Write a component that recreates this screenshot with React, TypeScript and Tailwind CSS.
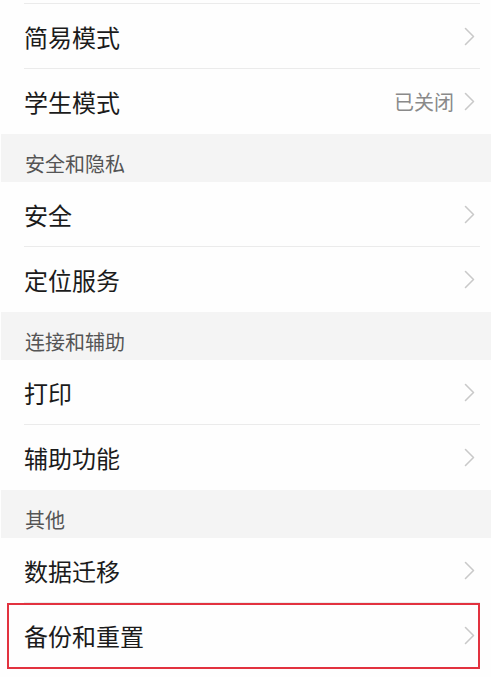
import React from "react";

const Chevron = () => (
  <svg width="11" height="19" viewBox="0 0 11 19" fill="none" className="shrink-0">
    <polyline points="1.5,1.5 9.5,9.5 1.5,17.5" stroke="#c9c9c9" strokeWidth="1.6" strokeLinecap="round" strokeLinejoin="round" />
  </svg>
);

type RowProps = { label: string; value?: string; divider?: boolean; highlight?: boolean };

const Row = ({ label, value, divider, highlight }: RowProps) => (
  <div className="relative bg-[#fefefe]">
    <div className={`flex items-center pl-6 pr-4 ${divider ? "h-16" : "h-[65px]"}`}>
      <span className="flex-1 text-[24px] leading-none text-[#1b1b1b] pt-px">{label}</span>
      {value && <span className="mr-[10px] text-[20px] leading-none text-[#8a8a8a]">{value}</span>}
      <Chevron />
    </div>
    {divider && <div className="ml-6 mr-[11px] h-px bg-[#ebebeb]" />}
    {highlight && <div className="absolute left-[7px] right-[11px] top-0 bottom-[-1px] border-2 border-[#e2323f]" />}
  </div>
);

const Header = ({ label }: { label: string }) => (
  <div className="flex h-12 items-center bg-[#f4f4f4] pl-6 pt-3 ml-px">
    <span className="text-[20px] leading-none text-[#555555]">{label}</span>
  </div>
);

export default function App() {
  return (
    <div
      className="w-[491px] h-[677px] overflow-hidden bg-[#fefefe]"
      style={{ fontFamily: '"Noto Sans CJK SC", "Noto Sans", sans-serif' }}
    >
      <div className="h-[3px]" />
      <div className="ml-6 mr-[11px] h-px bg-[#ebebeb]" />
      <Row label="简易模式" divider />
      <Row label="学生模式" value="已关闭" />
      <Header label="安全和隐私" />
      <Row label="安全" divider />
      <Row label="定位服务" />
      <Header label="连接和辅助" />
      <Row label="打印" divider />
      <Row label="辅助功能" />
      <Header label="其他" />
      <Row label="数据迁移" divider />
      <Row label="备份和重置" highlight />
    </div>
  );
}
